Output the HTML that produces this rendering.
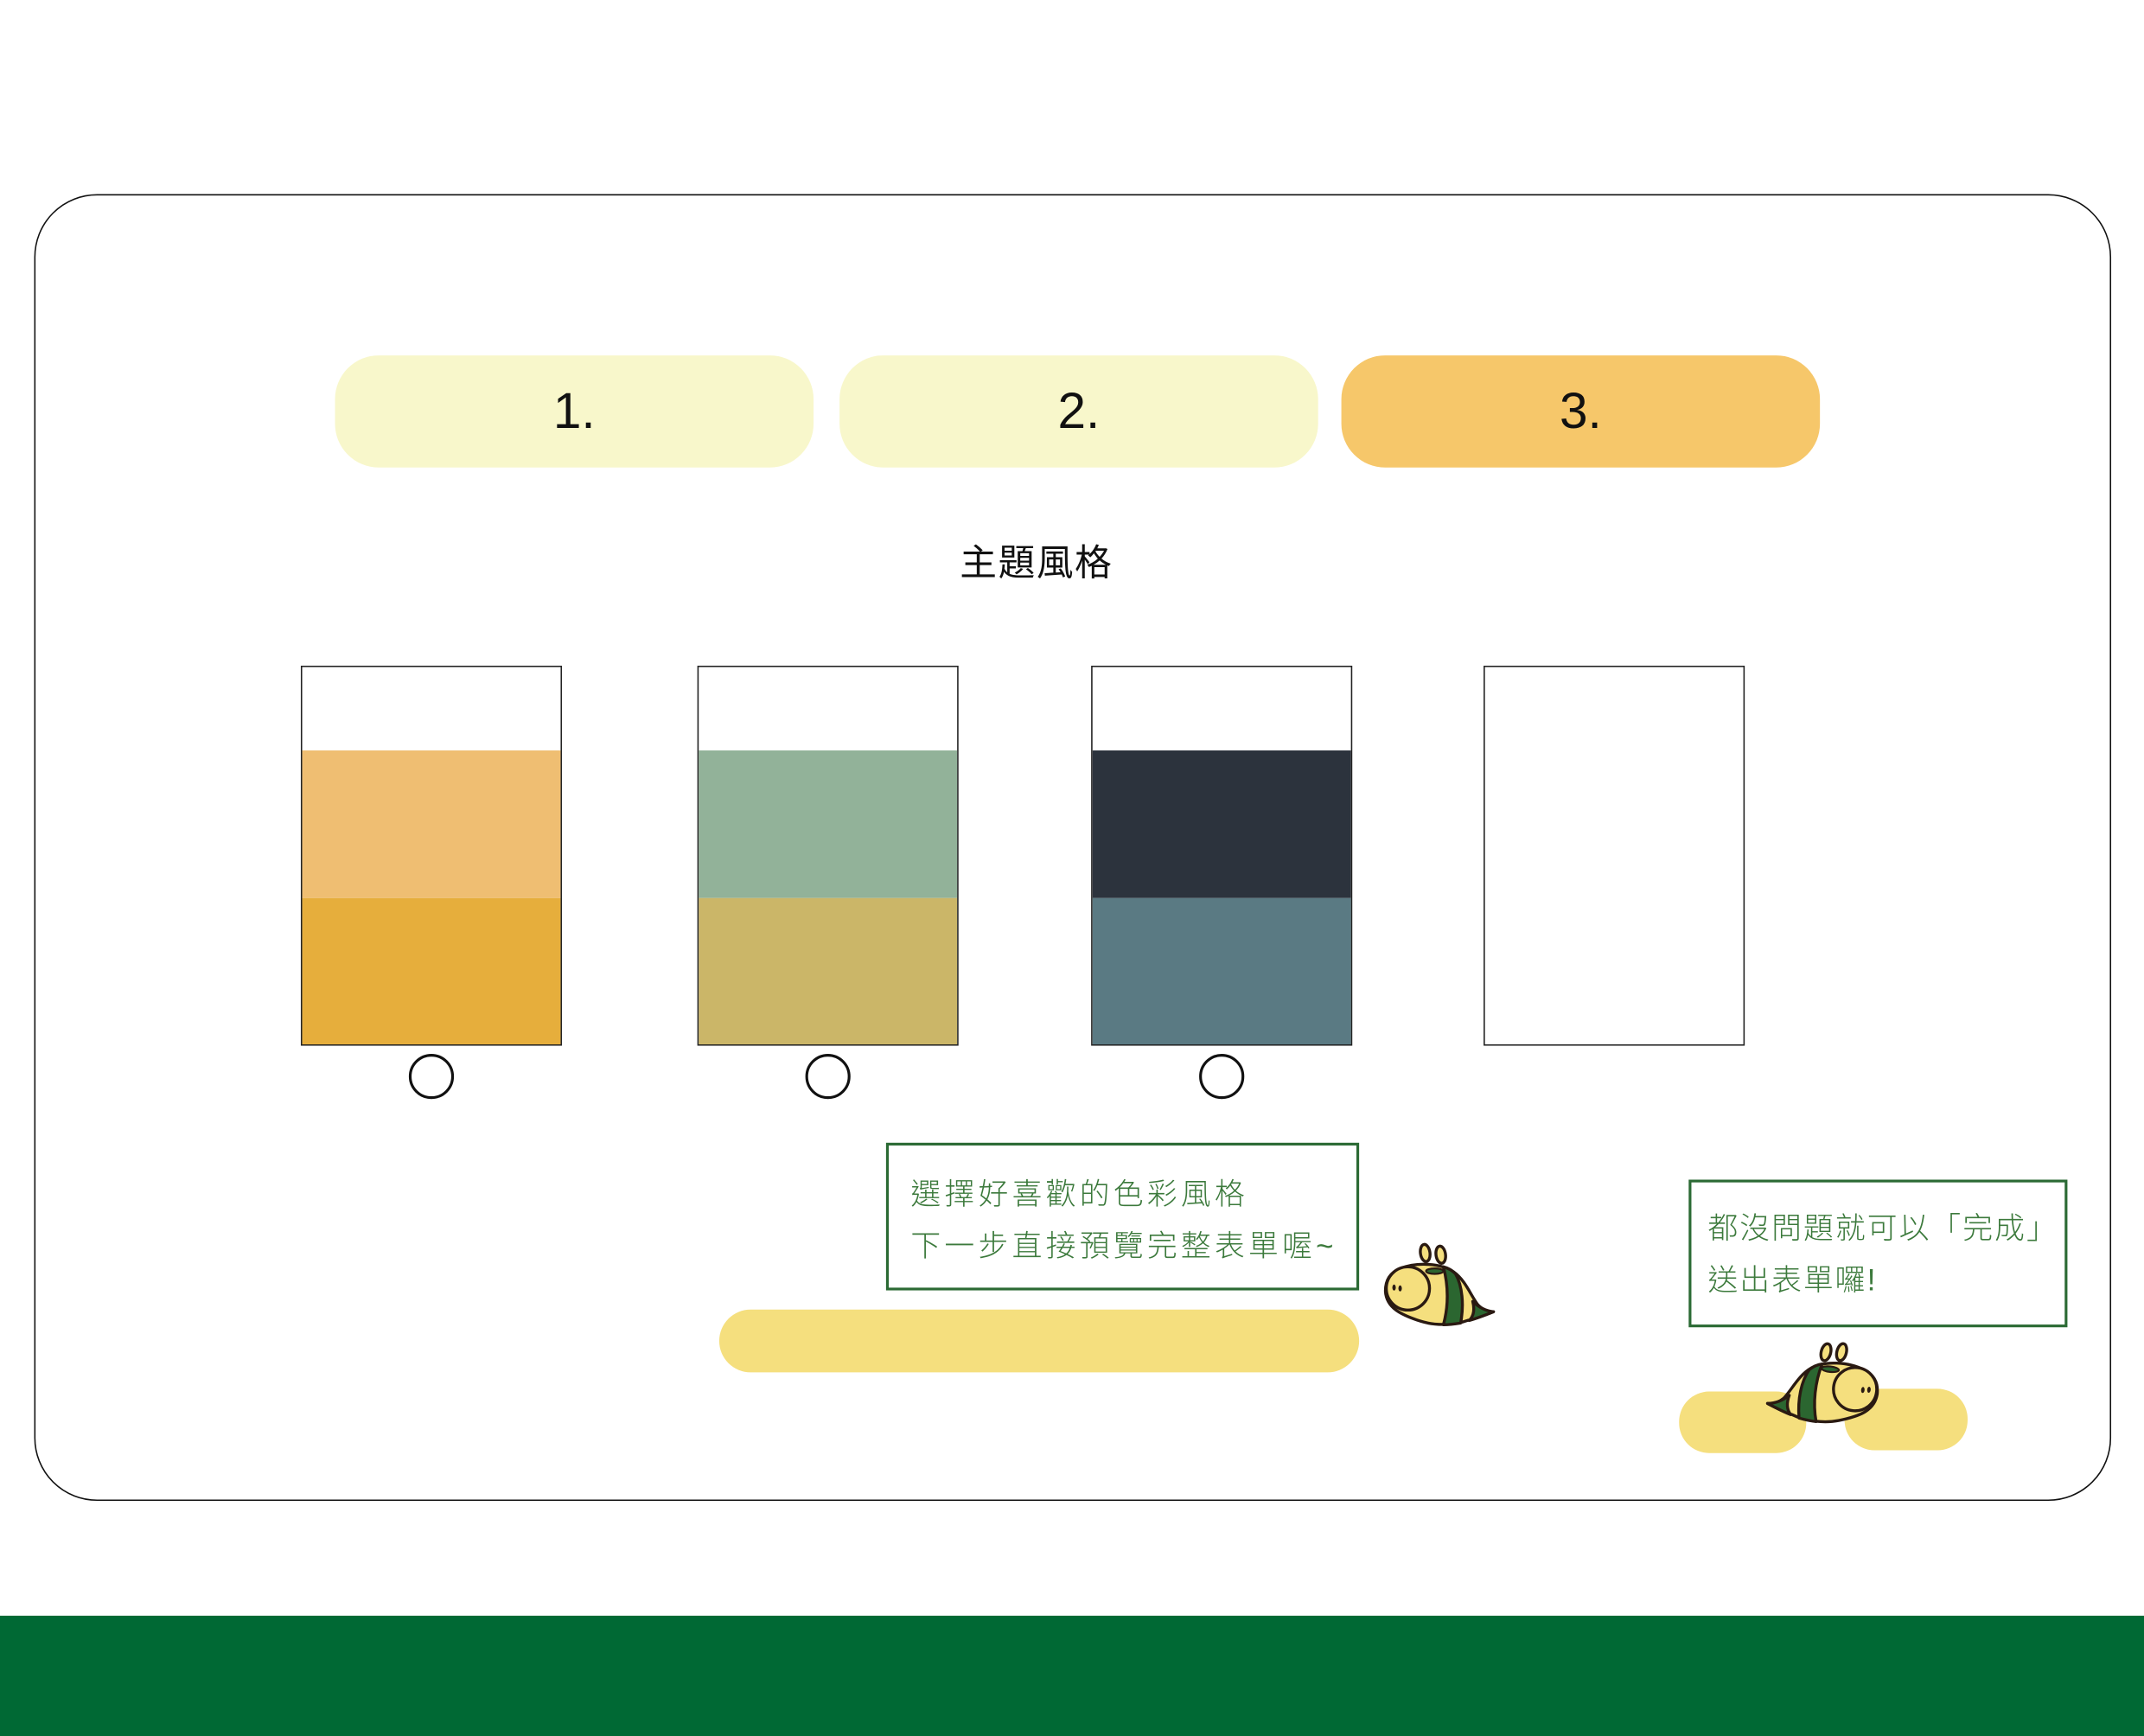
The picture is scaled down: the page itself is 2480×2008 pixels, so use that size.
<!DOCTYPE html>
<html><head><meta charset="utf-8"><style>
html,body{margin:0;padding:0;background:#fff;width:2480px;height:2008px;overflow:hidden}
#w{position:absolute;left:0;top:0;width:1568px;height:1270px;transform:scale(1.58163,1.5811);transform-origin:0 0;font-family:"Liberation Sans","Noto Sans CJK TC",sans-serif}
.a{position:absolute;box-sizing:border-box}
.pill{height:82px;top:260px;width:350px;border-radius:32px;display:flex;align-items:center;justify-content:center;font-size:37px;font-weight:300;color:#111}
.sw{top:487px;width:191px;height:278px;border:1px solid #222;background:#fff;overflow:hidden}
.sw div{position:absolute;left:0;width:100%;height:108px}
.c{width:33px;height:33px;border:2px solid #111;border-radius:50%;top:771px;background:#fff}
.box{border:2px solid #2b6a34;color:#3c7a3c;font-size:22px;letter-spacing:1.5px;line-height:38px;font-weight:300;white-space:nowrap}
</style></head><body><div id="w">
<div class="a" style="left:25px;top:142px;width:1519px;height:956px;border:1.5px solid #111;border-radius:46px"></div>
<div class="a pill" style="left:245px;background:#f8f7cb">1.</div>
<div class="a pill" style="left:614px;background:#f8f7cb">2.</div>
<div class="a pill" style="left:981px;background:#f6c76a">3.</div>
<div class="a" style="left:658px;top:390px;width:200px;text-align:center;font-size:27px;color:#111;letter-spacing:1px">主題風格</div>
<div class="a sw" style="left:220px"><div style="top:61px;background:#efbe72"></div><div style="top:169px;background:#e6ae3c"></div></div>
<div class="a sw" style="left:510px"><div style="top:61px;background:#92b299"></div><div style="top:169px;background:#cbb668"></div></div>
<div class="a sw" style="left:798px"><div style="top:61px;background:#2c333d"></div><div style="top:169px;background:#5a7a83"></div></div>
<div class="a sw" style="left:1085px"></div>
<div class="a c" style="left:299px"></div>
<div class="a c" style="left:589px"></div>
<div class="a c" style="left:877px"></div>
<div class="a box" style="left:648px;top:836px;width:346px;height:108px;padding:17px 0 0 16px;letter-spacing:2.7px">選擇好喜歡的色彩風格<br>下一步直接預覽完整表單喔~</div>
<div class="a" style="left:526px;top:958px;width:468px;height:46px;border-radius:23px;background:#f5df7e"></div>
<div class="a box" style="left:1235px;top:863px;width:277px;height:108px;padding:15px 0 0 12px;letter-spacing:1.3px">都沒問題就可以「完成」<br>送出表單囉!</div>
<div class="a" style="left:1228px;top:1018px;width:93px;height:45px;border-radius:22px;background:#f5df7e"></div>
<div class="a" style="left:1349px;top:1016px;width:90px;height:45px;border-radius:22px;background:#f5df7e"></div>
<svg class="a" style="left:1005.3px;top:904.1px;overflow:visible" width="101.2" height="75.9" viewBox="0 0 160 120">
<g id="bee" stroke="#2a1a12" stroke-width="3.4" stroke-linejoin="round">
<ellipse cx="59" cy="20" rx="5.5" ry="10" fill="#f5df7e" transform="rotate(-8 59 20)"/>
<ellipse cx="77" cy="22" rx="5.5" ry="10" fill="#f5df7e" transform="rotate(-8 77 22)"/>
<path d="M30 38 C50 30 78 32 92 42 C106 52 112 70 120 80 C126 86 132 88 138 88 C128 92 118 96 108 98 C92 104 70 104 54 99 C32 92 14 84 13 64 C13 50 20 42 30 38Z" fill="#f5df7e"/>
<path d="M80 36 C88 38 92 42 94 44 C102 58 104 80 100 101 C94 102 86 103 80 103 C86 82 86 58 80 36Z" fill="#2b6630"/>
<path d="M114 76 C122 84 130 87 138 88 C128 92 118 96 110 98 C116 92 116 84 114 76Z" fill="#2b6630"/>
<ellipse cx="70" cy="41" rx="10" ry="3.2" fill="#2b6630" stroke-width="2.2"/>
<circle cx="39" cy="61" r="25" fill="#f5df7e"/>
<ellipse cx="23" cy="60" rx="2" ry="3.5" fill="#2a1a12" stroke="none"/>
<ellipse cx="30" cy="61" rx="2" ry="3.5" fill="#2a1a12" stroke="none"/>
</g></svg>
<svg class="a" style="left:1288px;top:975px;overflow:visible" width="101.2" height="75.9" viewBox="0 0 160 120">
<g transform="translate(148,0) scale(-1,1) rotate(-6 80 60)"><use href="#bee"/></g></svg>
<div class="a" style="left:0;top:1182px;width:1568px;height:88px;background:#006934"></div>
</div></body></html>
